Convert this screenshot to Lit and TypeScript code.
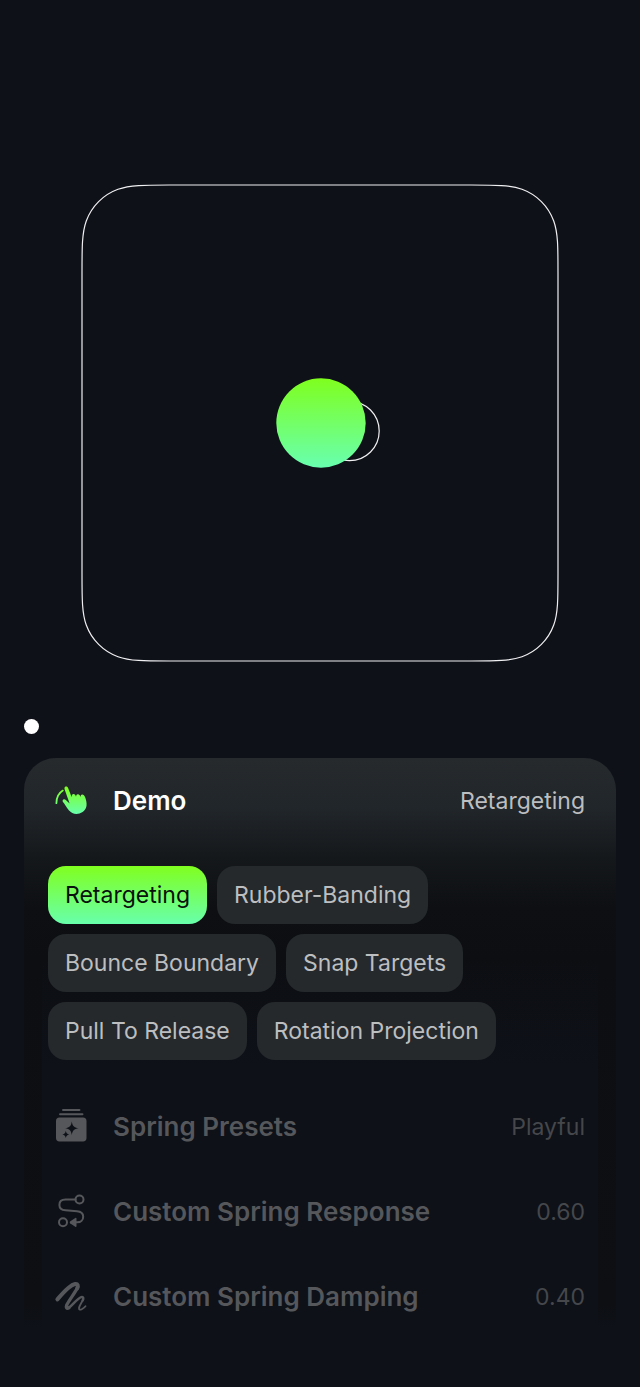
import { LitElement, html, svg, css } from "lit";
import { customElement, property, state } from "lit/decorators.js";
import { classMap } from "lit/directives/class-map.js";

const DEMOS = [
  "Retargeting",
  "Rubber-Banding",
  "Bounce Boundary",
  "Snap Targets",
  "Pull To Release",
  "Rotation Projection",
];

/** Rounded square with continuous-curvature corners. */
function squircle(x: number, y: number, size: number, r: number): string {
  const a = 1.528665 * r;
  const b = 1.088493 * r;
  const c = 0.8373 * r;
  const d = 0.631494 * r;
  const e = 0.074911 * r;
  const f = 0.372824 * r;
  const g = 0.16906 * r;
  const R = x + size;
  const B = y + size;
  return [
    `M${x + a} ${y}H${R - a}`,
    `C${R - b} ${y} ${R - c} ${y} ${R - d} ${y + e}`,
    `C${R - f} ${y + g} ${R - g} ${y + f} ${R - e} ${y + d}`,
    `C${R} ${y + c} ${R} ${y + b} ${R} ${y + a}`,
    `V${B - a}`,
    `C${R} ${B - b} ${R} ${B - c} ${R - e} ${B - d}`,
    `C${R - g} ${B - f} ${R - f} ${B - g} ${R - d} ${B - e}`,
    `C${R - c} ${B} ${R - b} ${B} ${R - a} ${B}`,
    `H${x + a}`,
    `C${x + b} ${B} ${x + c} ${B} ${x + d} ${B - e}`,
    `C${x + f} ${B - g} ${x + g} ${B - f} ${x + e} ${B - d}`,
    `C${x} ${B - c} ${x} ${B - b} ${x} ${B - a}`,
    `V${y + a}`,
    `C${x} ${y + b} ${x} ${y + c} ${x + e} ${y + d}`,
    `C${x + g} ${y + f} ${x + f} ${y + g} ${x + d} ${y + e}`,
    `C${x + c} ${y} ${x + b} ${y} ${x + a} ${y}Z`,
  ].join("");
}

const ICONS = {
  gesture: svg`
    <defs>
      <linearGradient id="hand" x1="0" y1="4" x2="0" y2="31" gradientUnits="userSpaceOnUse">
        <stop offset="0" stop-color="#80ff20" />
        <stop offset="1" stop-color="#68ffac" />
      </linearGradient>
    </defs>
    <path d="M2.4 20.2C2.4 14.6 5 10 8.8 7.6" fill="none" stroke="url(#hand)" stroke-width="1.8" stroke-linecap="round" />
    <path fill="url(#hand)" d="M10.600 6.300C10.200 4.900 10.700 3.900 11.800 3.600C12.900 3.300 13.700 3.900 14.200 5.200L17.700 14.300C17.500 12.200 18.300 11.100 19.600 11.100C20.800 11.100 21.600 11.900 22 13.700C22.200 11.900 22.900 11.100 24 11.200C25.200 11.300 26 12.100 26.400 13.900C26.700 12.300 27.400 11.400 28.500 11.600C30.200 11.800 31 13.600 31.800 16.300C33.600 22.700 32.300 26.400 28.600 29C23.600 32.300 18.300 31.300 14.800 27.200C12.700 24.800 11.200 21.500 9 18.900C8.300 18 8.500 17 9.400 16.500C10.300 16.100 11.300 16.500 12.100 17.200L15.600 20.500Z" />`,
  stack: svg`
    <path d="M9 1H25.500M6 5.300H28.500" fill="none" stroke="currentColor" stroke-width="1.900" stroke-linecap="round" />
    <path fill="currentColor" fill-rule="evenodd" d="M5.500 8.500H29C31.300 8.500 32.500 9.800 32.500 12V29C32.500 31.200 31.300 32.500 29 32.500H5.500C3.200 32.500 2 31.200 2 29V12C2 9.800 3.200 8.500 5.500 8.500ZM17.800 12.400C17.100 17 15.600 18.400 11.200 19.200C15.600 20 17.100 21.400 17.800 26C18.500 21.400 20 20 24.600 19.200C20 18.400 18.500 17 17.800 12.400ZM11.800 21.700C11.400 24.100 10.700 24.900 8.400 25.400C10.700 25.900 11.400 26.700 11.800 29.100C12.200 26.700 12.900 25.900 15.200 25.400C12.900 24.900 12.200 24.100 11.800 21.700Z" />`,
  path: svg`
    <g fill="none" stroke="currentColor" stroke-width="2" stroke-linecap="round">
      <circle cx="25.500" cy="5.500" r="4" />
      <circle cx="9" cy="28.300" r="4" />
      <path d="M21.500 5.500H11.500C7.700 5.500 5.400 7.700 5.400 10.900C5.400 14.200 7.600 16 11.500 16.300L23 17.200C27 17.500 29.200 19.400 29.200 22.700C29.200 26 26.900 28.300 23.200 28.300H21" />
    </g>
    <path fill="currentColor" d="M16.300 27.300L21.300 24C22 23.600 22.500 23.900 22.500 24.700V32C22.500 32.800 22 33.100 21.300 32.700L16.300 29.400C15.500 28.800 15.500 27.900 16.300 27.300Z" />`,
  scribble: svg`
    <g fill="none" stroke="currentColor" stroke-linecap="round" stroke-linejoin="round">
      <path d="M3.400 20.400C9.200 13.500 16.600 5.700 21.200 5C23.800 4.600 24.500 6.700 23.200 9.300" stroke-width="4" />
      <path d="M23.300 9C20.800 14.200 14.800 21.400 12.600 26.300C11.600 28.700 12.700 30 15 28.800" stroke-width="3.300" />
      <path d="M14.800 28.800C18.600 26.400 23.300 19.400 27.200 18.100C29.600 17.500 29.700 19.600 28.700 21.300" stroke-width="2.500" />
      <path d="M28.700 21.300C27.400 24 25.400 26.500 25 29C24.900 31 26.200 31 27.700 30.300C29.200 29.500 30.600 28.300 31.500 27.200" stroke-width="1.800" />
    </g>`,
};

type IconName = keyof typeof ICONS;

@customElement("motion-stage")
class MotionStage extends LitElement {
  static styles = css`
    :host {
      display: block;
    }
    .canvas {
      display: block;
      width: 100%;
      height: auto;
    }
  `;

  render() {
    return html`
      <svg class="canvas" viewBox="0 0 478 478" role="img" aria-label="Spring preview">
        <defs>
          <linearGradient id="ball" x1="0" y1="0" x2="0" y2="1">
            <stop offset="0" stop-color="#7fff1e" />
            <stop offset="1" stop-color="#68ffb0" />
          </linearGradient>
        </defs>
        <path d=${squircle(1, 1, 476, 57)} fill="none" stroke="#f0f0f2" stroke-width="1.200" />
        <circle cx="268.500" cy="247" r="29.700" fill="none" stroke="#f0f0f2" stroke-width="1.200" />
        <circle cx="240" cy="239" r="44.700" fill="url(#ball)" />
      </svg>
    `;
  }
}

@customElement("setting-row")
class SettingRow extends LitElement {
  static styles = css`
    :host {
      display: block;
    }
    .row {
      display: flex;
      align-items: center;
      gap: 24px;
      width: 100%;
      height: 85px;
      padding: 0 31px 0 30px;
      border: 0;
      background: none;
      color: #55575b;
      font: inherit;
      text-align: left;
      cursor: pointer;
    }
    .icon {
      flex: none;
      width: 35px;
      height: 35px;
      overflow: visible;
    }
    .label {
      flex: 1;
      font-size: 26px;
      font-weight: 600;
    }
    .value {
      font-size: 23px;
      color: #45474b;
    }
    .active .label {
      color: #fff;
    }
    .active .value {
      color: #bcbec0;
    }
  `;

  @property() icon: IconName = "gesture";
  @property() label = "";
  @property() value = "";
  @property({ type: Boolean }) active = false;

  render() {
    return html`
      <button
        class=${classMap({ row: true, active: this.active })}
        type="button"
        aria-expanded=${this.active ? "true" : "false"}
      >
        <svg class="icon" viewBox="0 0 35 35" aria-hidden="true">${ICONS[this.icon]}</svg>
        <span class="label">${this.label}</span>
        <span class="value">${this.value}</span>
      </button>
    `;
  }
}

@customElement("app-root")
class AppRoot extends LitElement {
  static styles = css`
    :host {
      display: block;
      box-sizing: border-box;
      min-height: 100vh;
      padding: 184px 24px 48px;
      background: #0e1118;
      color: #bcbec0;
      font-family: Inter, "Liberation Sans", sans-serif;
    }
    .stage {
      margin: 0 57px;
    }
    .dot {
      display: block;
      width: 15px;
      height: 15px;
      margin: 57px 0 24px;
      padding: 0;
      border: 0;
      border-radius: 50%;
      background: #fff;
      cursor: pointer;
    }
    .card {
      border-radius: 32px 32px 0 0;
      background: linear-gradient(
        #262a2d 0,
        #21262a 50px,
        #15181b 100px,
        #0d0f12 150px,
        #0c0e12 200px,
        #0d0f13 94%,
        #0e1118 98%
      );
    }
    .inner {
      padding-bottom: 1px;
      background: linear-gradient(#0e111800 200px, #0e1118 310px) 50% 0 / calc(100% - 36px) 100% no-repeat;
    }
    .chips {
      display: flex;
      flex-wrap: wrap;
      gap: 10px;
      padding: 23px 24px 24px;
    }
    .chip {
      height: 58px;
      padding: 0 17px;
      border: 0;
      border-radius: 18px;
      background: #25292c;
      color: #bcbec0;
      font: inherit;
      font-size: 23px;
      cursor: pointer;
    }
    .selected {
      background: linear-gradient(#80ff1f, #68ffac);
      color: #0b120d;
    }
  `;

  @state() private demo = DEMOS[0];

  render() {
    return html`
      <motion-stage class="stage"></motion-stage>
      <button class="dot" type="button" aria-label="Toggle controls"></button>
      <section class="card">
        <div class="inner">
          <setting-row icon="gesture" label="Demo" value=${this.demo} active></setting-row>
          <div class="chips">
            ${DEMOS.map(
              (name) => html`
                <button
                  class=${classMap({ chip: true, selected: name === this.demo })}
                  type="button"
                  aria-pressed=${name === this.demo ? "true" : "false"}
                  @click=${() => (this.demo = name)}
                >
                  ${name}
                </button>
              `
            )}
          </div>
          <setting-row icon="stack" label="Spring Presets" value="Playful"></setting-row>
          <setting-row icon="path" label="Custom Spring Response" value="0.60"></setting-row>
          <setting-row icon="scribble" label="Custom Spring Damping" value="0.40"></setting-row>
        </div>
      </section>
    `;
  }
}
